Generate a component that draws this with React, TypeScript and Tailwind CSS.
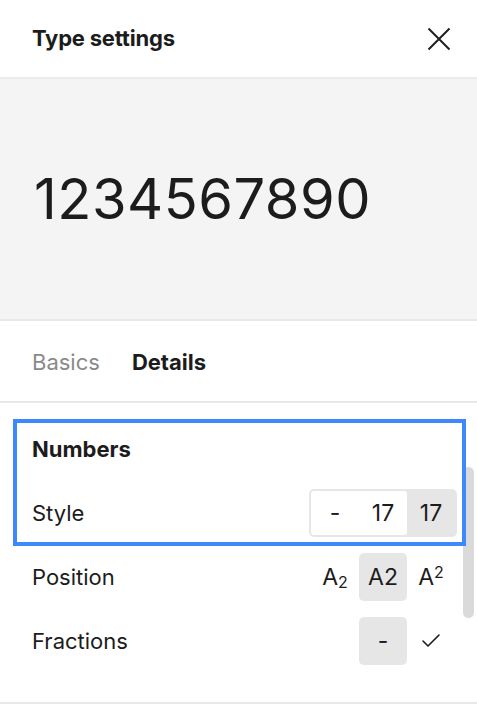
import { Check } from "lucide-react";

const font = { fontFamily: "Inter, 'Noto Sans', sans-serif" };

function CloseIcon() {
  return (
    <svg width="24" height="24" viewBox="0 0 24 24" fill="none" stroke="#1f1f1f" strokeWidth="2">
      <path d="M1.5 1.5 22.5 22.5M22.5 1.5 1.5 22.5" />
    </svg>
  );
}

function Row({ label, children, className }: { label: string; children?: React.ReactNode; className?: string }) {
  return (
    <div className={"flex h-[64px] items-center justify-between pl-[32px] " + (className ?? "pr-[22px]")}>
      <span className="text-[22px] text-[#1c1c1c]">{label}</span>
      {children}
    </div>
  );
}

export default function App() {
  return (
    <div style={font} className="flex h-[704px] w-[477px] flex-col overflow-hidden bg-white text-[#1c1c1c]">
      <header className="flex h-[79px] shrink-0 items-center justify-between border-b-2 border-[#ebebeb] pl-[32px] pr-[26px]">
        <h1 className="text-[22px] font-bold tracking-[-0.2px]">Type settings</h1>
        <button type="button" aria-label="Close" className="flex size-[24px] items-center justify-center">
          <CloseIcon />
        </button>
      </header>

      <section className="flex h-[242px] shrink-0 items-center border-b-2 border-[#e8e8e8] bg-[#f4f4f4] pl-[34px]">
        <span className="text-[56px] font-normal leading-none tracking-[0.5px]">1234567890</span>
      </section>

      <nav className="flex h-[82px] shrink-0 items-center gap-[32px] border-b-2 border-[#e8e8e8] pt-[2px] pl-[32px]">
        <span className="text-[22px] text-[#8a8a8a]">Basics</span>
        <span className="text-[22px] font-bold">Details</span>
      </nav>

      <div className="relative flex-1 border-b-2 border-[#e8e8e8] pt-[14px]">
        <div className="relative">
          <div className="flex h-[64px] items-center pl-[32px]">
            <span className="text-[22px] font-bold">Numbers</span>
          </div>
          <Row label="Style" className="pr-[20px]">
            <div className="flex rounded-[5px] border-2 border-[#e6e6e6] bg-[#e6e6e6]">
              <div className="flex rounded-[3px] bg-white">
                <span className="flex h-[44px] w-[48px] items-center justify-center text-[23px]">-</span>
                <span className="flex h-[44px] w-[48px] items-center justify-center text-[23px]">17</span>
              </div>
              <span className="flex h-[44px] w-[48px] items-center justify-center text-[23px]">17</span>
            </div>
          </Row>
          <div className="pointer-events-none absolute top-[2px] right-[11px] bottom-[-1px] left-[13px] z-10 border-[4px] border-[#3d88fc]" />
        </div>

        <Row label="Position">
          <div className="flex">
            <span className="flex h-[48px] w-[48px] items-center justify-center text-[23px]">
              A<span className="relative top-[5px] text-[16px]">2</span>
            </span>
            <span className="flex h-[48px] w-[48px] items-center justify-center rounded-[5px] bg-[#e6e6e6] text-[23px]">A2</span>
            <span className="flex h-[48px] w-[48px] items-center justify-center text-[23px]">
              A<span className="relative top-[-5px] text-[16px]">2</span>
            </span>
          </div>
        </Row>

        <Row label="Fractions">
          <div className="flex">
            <span className="flex h-[48px] w-[48px] items-center justify-center rounded-[5px] bg-[#e6e6e6] text-[23px]">-</span>
            <span className="flex h-[48px] w-[48px] items-center justify-center">
              <Check size={24} strokeWidth={1.6} color="#1c1c1c" />
            </span>
          </div>
        </Row>

        <div className="absolute top-[64px] right-[3px] h-[151px] w-[11px] rounded-full bg-[#dadada]" />
      </div>
    </div>
  );
}
